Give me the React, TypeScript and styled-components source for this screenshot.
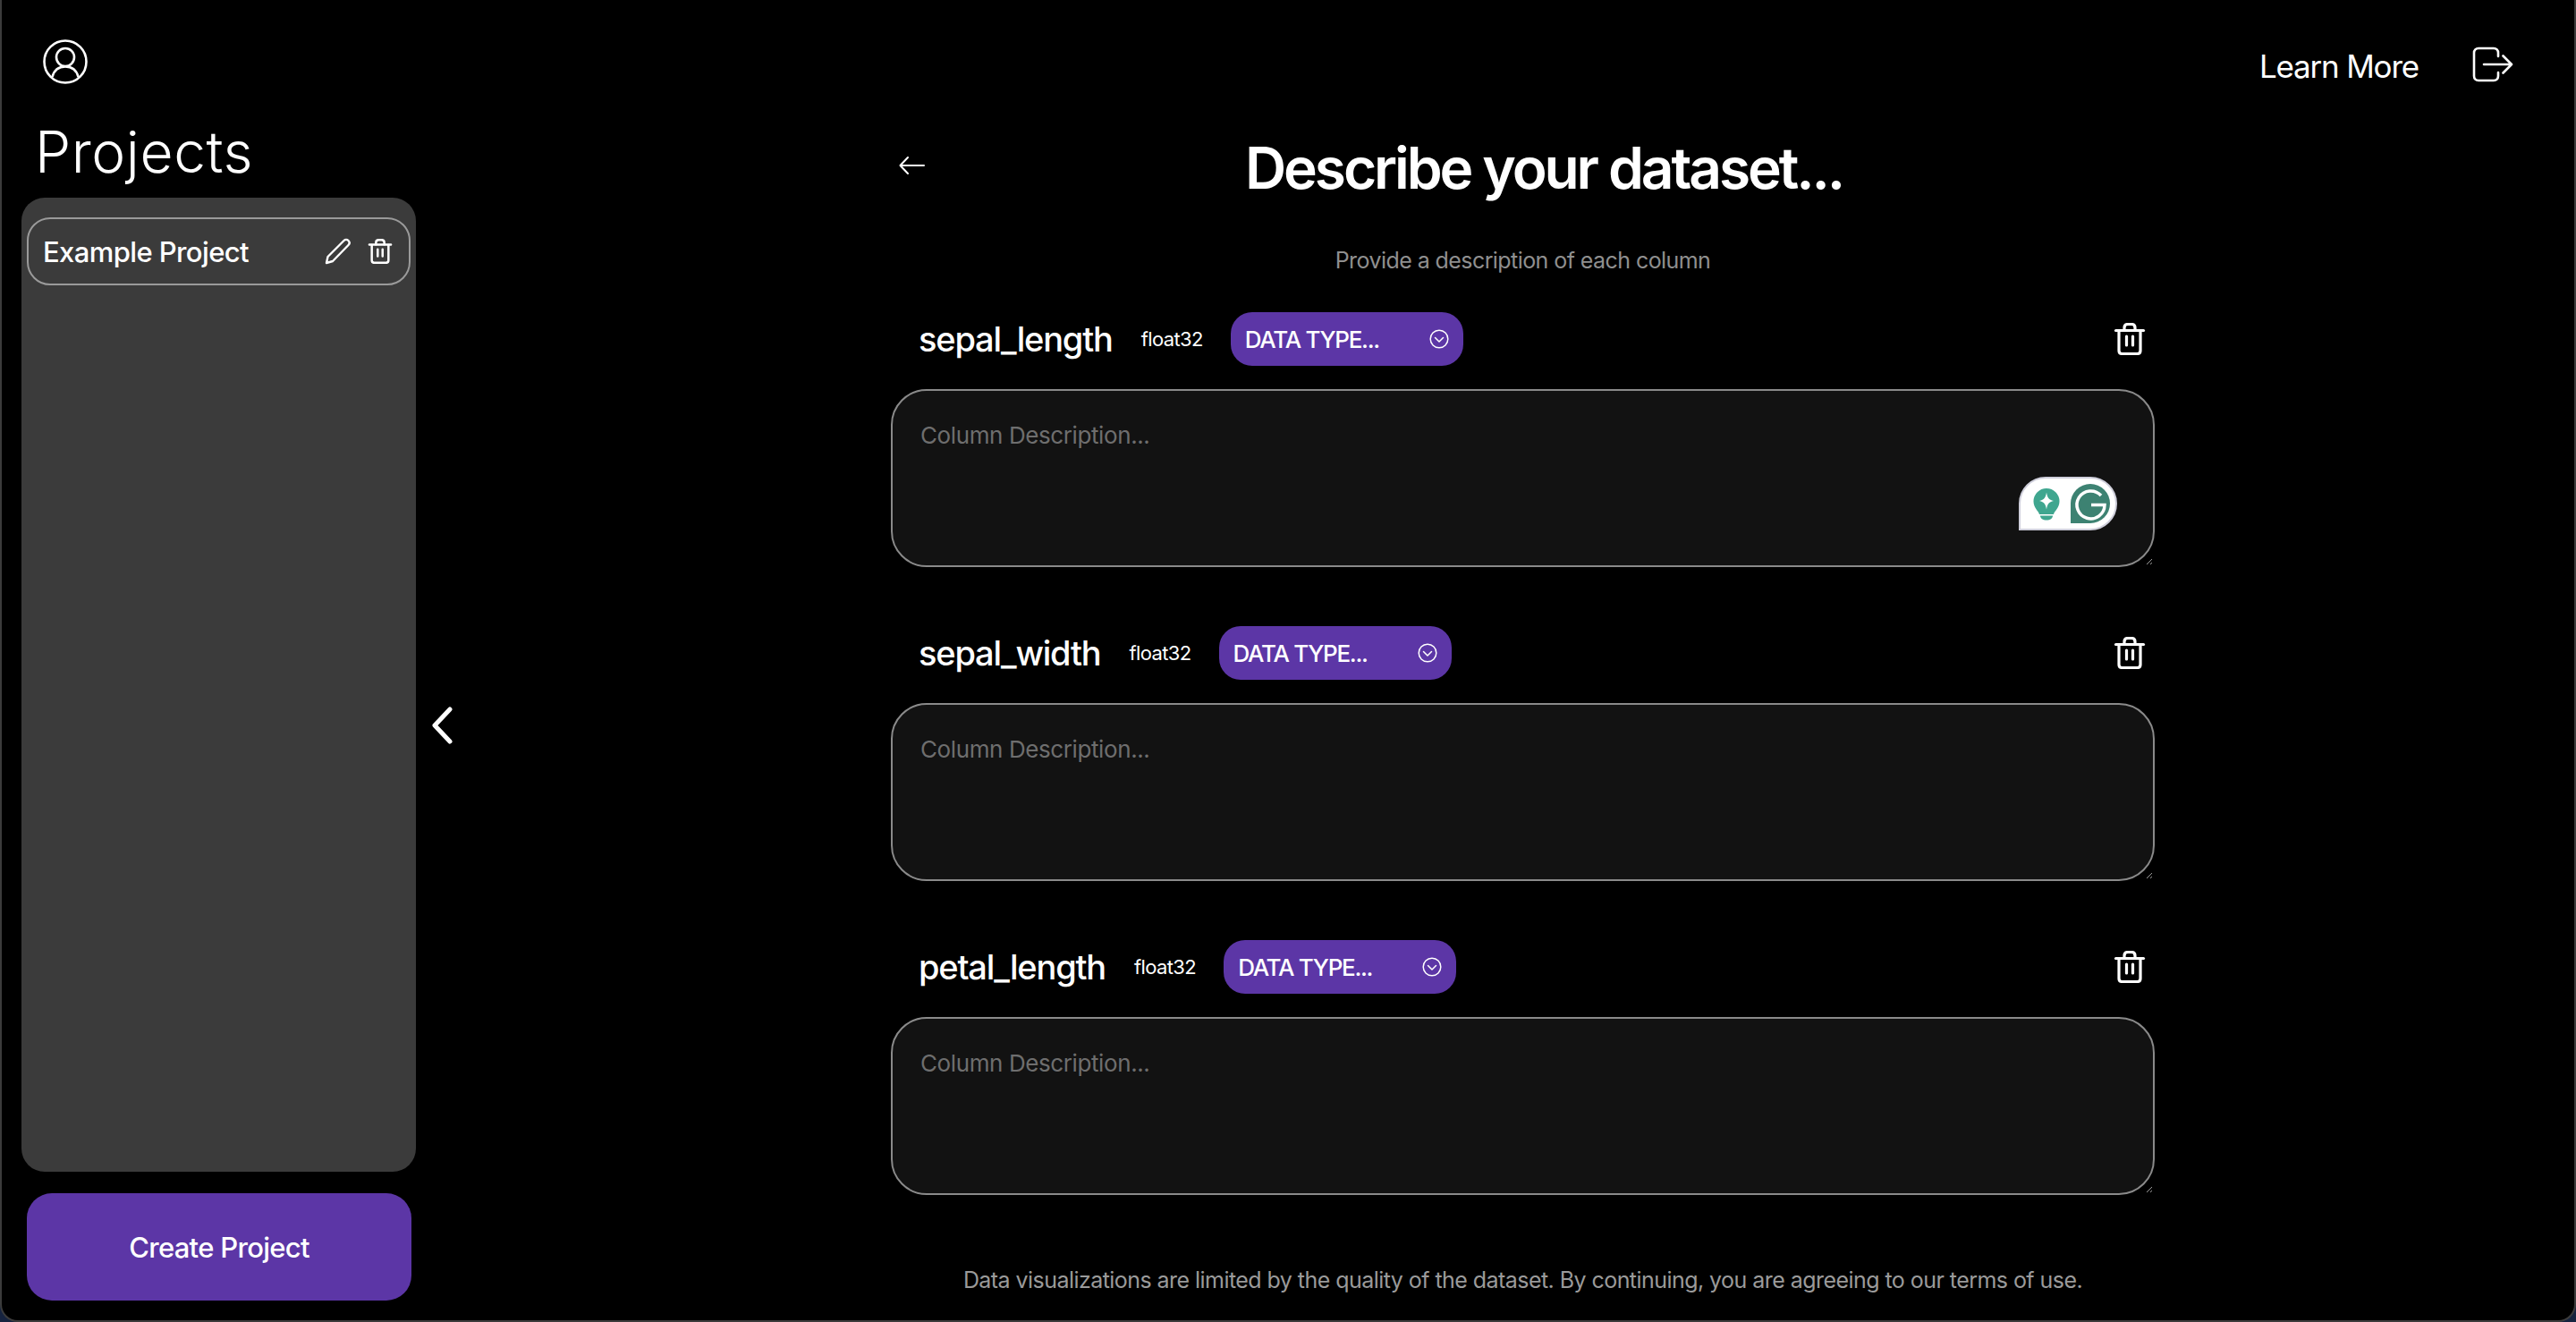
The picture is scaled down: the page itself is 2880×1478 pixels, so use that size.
import { createGlobalStyle, styled } from "styled-components";

const GlobalStyle = createGlobalStyle`
  html, body {
    margin: 0;
    padding: 0;
    background: #16233f;
  }
  * {
    box-sizing: border-box;
  }
`;

const Shell = styled.div`
  width: 2880px;
  height: 1478px;
  display: flex;
  background: #000;
  border-left: 2px solid #3c3c3c;
  border-right: 2px solid #3c3c3c;
  border-bottom: 2px solid #3c3c3c;
  border-radius: 0 0 20px 20px;
  overflow: hidden;
  color: #fff;
  font-family: Inter, "Liberation Sans", sans-serif;
`;

const Sidebar = styled.aside`
  width: 476px;
  flex: none;
  display: flex;
  flex-direction: column;
  padding: 44px 0 22px 22px;
`;

const ProfileButton = styled.div`
  margin-left: 24px;
  height: 50px;
  color: #fff;
`;

const SidebarTitle = styled.h2`
  margin: 38px 0 0 15px;
  font-size: 64px;
  line-height: 76px;
  font-weight: 350;
  letter-spacing: 0.6px;
`;

const ProjectPanel = styled.div`
  flex: 1;
  width: 441px;
  margin-top: 13px;
  padding: 22px 6px;
  background: #3b3b3b;
  border-radius: 26px;
`;

const ProjectItem = styled.div`
  height: 76px;
  display: flex;
  align-items: center;
  padding: 0 18px 0 16px;
  border: 2px solid #9a9a9a;
  border-radius: 26px;
`;

const ProjectName = styled.span`
  flex: 1;
  font-size: 31px;
  font-weight: 500;
  letter-spacing: -0.6px;
`;

const ProjectActions = styled.div`
  display: flex;
  align-items: center;
  gap: 18px;
`;

const CreateButton = styled.button`
  width: 430px;
  height: 120px;
  margin: 24px 0 0 6px;
  flex: none;
  border: none;
  border-radius: 28px;
  background: #5c36a6;
  color: #fff;
  font-family: inherit;
  font-size: 31px;
  font-weight: 500;
  letter-spacing: -0.7px;
`;

const CollapseHandle = styled.div`
  flex: none;
  width: 40px;
  margin: 790px 0 0 2px;
`;

const Main = styled.main`
  flex: 1;
  min-width: 0;
  display: flex;
  flex-direction: column;
`;

const TopBar = styled.header`
  display: flex;
  justify-content: flex-end;
  align-items: center;
  gap: 60px;
  height: 40px;
  margin-top: 52px;
  padding-right: 68px;
`;

const LearnMore = styled.span`
  padding-top: 3px;
  font-size: 35px;
  font-weight: 400;
  letter-spacing: -1.2px;
`;

const Content = styled.div`
  width: 1413px;
  margin-left: 476px;
`;

const TitleRow = styled.div`
  display: flex;
  align-items: center;
  height: 80px;
  margin-top: 56px;
  padding-left: 9px;
`;

const BackButton = styled.div`
  display: flex;
  margin-top: -6px;
`;

const Title = styled.h1`
  margin: 0 0 0 358px;
  font-size: 64px;
  line-height: 80px;
  font-weight: 600;
  letter-spacing: -3.1px;
  white-space: nowrap;
`;

const Subtitle = styled.p`
  margin: 45px 0 0;
  text-align: center;
  font-size: 25px;
  line-height: 36px;
  color: #8f8f8f;
  letter-spacing: -0.57px;
`;

const ColumnBlock = styled.section`
  margin-top: 40px;
  & + & {
    margin-top: 66px;
  }
`;

const ColumnHeader = styled.div`
  display: flex;
  align-items: center;
  height: 60px;
  padding: 0 10px 0 31px;
`;

const ColumnName = styled.span`
  font-size: 38px;
  font-weight: 500;
  letter-spacing: -1.2px;
`;

const ColumnType = styled.span`
  margin-left: 32px;
  font-size: 22px;
  letter-spacing: -0.6px;
`;

const TypeSelect = styled.div`
  width: 260px;
  height: 60px;
  margin-left: 31px;
  padding: 0 16px;
  display: flex;
  align-items: center;
  justify-content: space-between;
  background: #5c36a6;
  border-radius: 24px;
  font-size: 26px;
  font-weight: 500;
  letter-spacing: -1.3px;
`;

const DeleteColumn = styled.div`
  margin-left: auto;
  display: flex;
`;

const DescriptionWrap = styled.div`
  position: relative;
  margin-top: 26px;
  height: 199px;
`;

const Description = styled.textarea`
  display: block;
  width: 100%;
  height: 199px;
  padding: 32px 31px;
  background: #121212;
  border: 2px solid #8a8a8a;
  border-radius: 40px;
  outline: none;
  resize: vertical;
  color: #fff;
  font-family: inherit;
  font-size: 26px;
  line-height: 36px;
  letter-spacing: -0.4px;
  &::placeholder {
    color: #6e6e6e;
    opacity: 1;
  }
`;

const GrammarlyBadge = styled.div`
  position: absolute;
  left: 1261px;
  top: 98px;
  width: 110px;
  height: 60px;
  background: #fff;
  border: 2px solid #cfcfdb;
  border-radius: 30px 30px 30px 0;
`;

const Footer = styled.p`
  margin: 77px 0 0 -130px;
  width: 1673px;
  text-align: center;
  font-size: 25px;
  line-height: 36px;
  color: #9a9a9a;
  letter-spacing: -0.55px;
`;

const UserIcon = () => (
  <svg width="50" height="50" viewBox="0 0 50 50" fill="none" stroke="currentColor" strokeWidth="2.6">
    <circle cx="25" cy="25" r="23.5" />
    <circle cx="25" cy="20" r="10" />
    <path d="M10.5 42c2-8 7.5-11.5 14.5-11.5S37.500 34 39.500 42" />
  </svg>
);

const PencilIcon = () => (
  <svg width="30" height="30" viewBox="0 0 30 30" fill="none" stroke="#fff" strokeWidth="2.4" strokeLinejoin="round">
    <path d="M2 28l1.500-7L21.500 3c1.500-1.500 3.500-1.500 5 0s1.500 3.500 0 5L9 26z" />
  </svg>
);

const TrashIcon = ({ size }: { size: number }) => (
  <svg width={size} height={size} viewBox="0 0 34 36" fill="none" stroke="#fff" strokeWidth="3.2" strokeLinecap="round" strokeLinejoin="round">
    <path d="M1.500 8.500h31" />
    <path d="M11 8V5.500C11 3 12.500 1.500 15 1.500h4C21.500 1.500 23 3 23 5.500V8" />
    <path d="M5 9v22c0 2.500 1.500 3.500 3.500 3.500h17c2 0 3.500-1 3.500-3.500V9" />
    <path d="M13.500 15v10M20.500 15v10" />
  </svg>
);

const ChevronCircleIcon = () => (
  <svg width="22" height="22" viewBox="0 0 22 22" fill="none" stroke="#fff" strokeWidth="1.500" strokeLinecap="round" strokeLinejoin="round">
    <circle cx="11" cy="11" r="9.800" />
    <path d="M6.500 9.500l4.500 4.500 4.500-4.500" />
  </svg>
);

const LogoutIcon = () => (
  <svg width="46" height="40" viewBox="0 0 46 40" fill="none" stroke="#fff" strokeWidth="2.600" strokeLinecap="round" strokeLinejoin="round">
    <path d="M29 11V7c0-3-2-5-5-5H7C4 2 2 4 2 7v26c0 3 2 5 5 5h17c3 0 5-2 5-5v-4" />
    <path d="M13 20h31M34.500 10.500L44 20l-9.500 9.500" />
  </svg>
);

const BackArrow = () => (
  <svg width="29" height="22" viewBox="0 0 29 22" fill="none" stroke="#fff" strokeWidth="2" strokeLinecap="round" strokeLinejoin="round">
    <path d="M1.500 11H28M10 2L1.500 11 10 20" />
  </svg>
);

const CollapseIcon = () => (
  <svg width="30" height="42" viewBox="0 0 30 42" fill="none" stroke="#fff" strokeWidth="5" strokeLinecap="round" strokeLinejoin="round">
    <path d="M23 3L6 21l17 18" />
  </svg>
);

const GrammarlyIcons = () => (
  <svg width="106" height="56" viewBox="0 0 106 56" style={{ display: "block" }}>
    <path d="M21 40c-1-4-6.500-7-6.500-14.500a14.500 14.500 0 0 1 29 0c0 7.500-5.500 10.500-6.500 14.500z" fill="#3fa68f" />
    <path d="M29 15.500c1 6 2.500 8 8 9.500-5.500 1.500-7 3.500-8 9.500-1-6-2.500-8-8-9.500 5.500-1.500 7-3.500 8-9.500z" fill="#fff" />
    <path d="M22 41.500h14c0 3-3 5-7 5s-7-2-7-5z" fill="#3fa68f" />
    <path d="M56 50V28a22 22 0 1 1 22 22z" fill="#3d8272" />
    <path d="M90 19a15.500 15.500 0 1 0 4 10.500H79" fill="none" stroke="#fff" strokeWidth="3.500" />
  </svg>
);

const columns = [
  { name: "sepal_length", type: "float32" },
  { name: "sepal_width", type: "float32" },
  { name: "petal_length", type: "float32" },
];

function App() {
  return (
    <>
      <GlobalStyle />
      <Shell>
        <Sidebar>
          <ProfileButton>
            <UserIcon />
          </ProfileButton>
          <SidebarTitle>Projects</SidebarTitle>
          <ProjectPanel>
            <ProjectItem>
              <ProjectName>Example Project</ProjectName>
              <ProjectActions>
                <PencilIcon />
                <TrashIcon size={28} />
              </ProjectActions>
            </ProjectItem>
          </ProjectPanel>
          <CreateButton>Create Project</CreateButton>
        </Sidebar>
        <CollapseHandle>
          <CollapseIcon />
        </CollapseHandle>
        <Main>
          <TopBar>
            <LearnMore>Learn More</LearnMore>
            <LogoutIcon />
          </TopBar>
          <Content>
            <TitleRow>
              <BackButton>
                <BackArrow />
              </BackButton>
              <Title>Describe your dataset...</Title>
            </TitleRow>
            <Subtitle>Provide a description of each column</Subtitle>
            {columns.map((column, index) => (
              <ColumnBlock key={column.name}>
                <ColumnHeader>
                  <ColumnName>{column.name}</ColumnName>
                  <ColumnType>{column.type}</ColumnType>
                  <TypeSelect>
                    DATA TYPE...
                    <ChevronCircleIcon />
                  </TypeSelect>
                  <DeleteColumn>
                    <TrashIcon size={36} />
                  </DeleteColumn>
                </ColumnHeader>
                <DescriptionWrap>
                  <Description placeholder="Column Description..." />
                  {index === 0 && (
                    <GrammarlyBadge>
                      <GrammarlyIcons />
                    </GrammarlyBadge>
                  )}
                </DescriptionWrap>
              </ColumnBlock>
            ))}
            <Footer>
              Data visualizations are limited by the quality of the dataset. By continuing, you are agreeing to our terms of use.
            </Footer>
          </Content>
        </Main>
      </Shell>
    </>
  );
}

export default App;
